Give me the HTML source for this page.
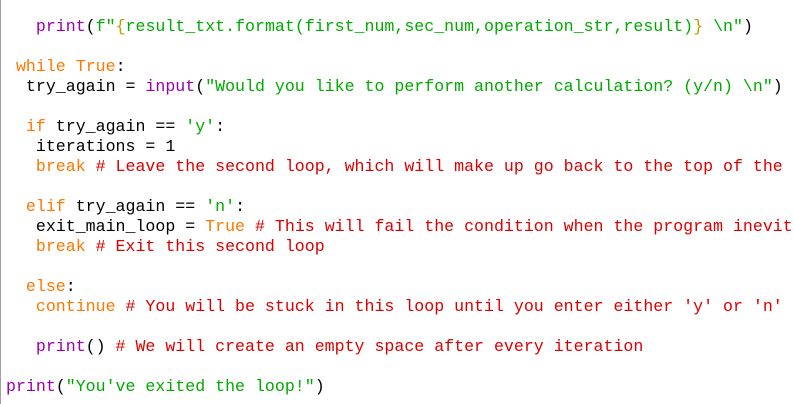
<!DOCTYPE html>
<html><head><style>
html,body{margin:0;padding:0;background:#fff;width:794px;height:404px;overflow:hidden}
.b{position:absolute;left:0;top:0;width:1px;height:404px;background:#a0a0a0}
pre{position:absolute;left:6px;top:17px;margin:0;font-family:"Liberation Mono","Courier New",monospace;font-size:16.6px;line-height:20px;color:#000;white-space:pre}
.k{color:#ff7700}.p{color:#9900aa}.s{color:#00aa00}.c{color:#dd0000}.y{color:#b8a000}
</style></head><body><div class="b"></div>
<pre>   <span class="p">print</span>(<span class="s">f"<span class="y">{</span>result_txt.format(first_num,sec_num,operation_str,result)<span class="y">}</span> \n"</span>)

 <span class="k">while</span> <span class="k">True</span>:
  try_again = <span class="p">input</span>(<span class="s">"Would you like to perform another calculation? (y/n) \n"</span>)

  <span class="k">if</span> try_again == <span class="s">'y'</span>:
   iterations = 1
   <span class="k">break</span> <span class="c"># Leave the second loop, which will make up go back to the top of the</span>

  <span class="k">elif</span> try_again == <span class="s">'n'</span>:
   exit_main_loop = <span class="k">True</span> <span class="c"># This will fail the condition when the program inevit</span>
   <span class="k">break</span> <span class="c"># Exit this second loop</span>

  <span class="k">else</span>:
   <span class="k">continue</span> <span class="c"># You will be stuck in this loop until you enter either 'y' or 'n'</span>

   <span class="p">print</span>() <span class="c"># We will create an empty space after every iteration</span>

<span class="p">print</span>(<span class="s">"You've exited the loop!"</span>)</pre>
</body></html>
